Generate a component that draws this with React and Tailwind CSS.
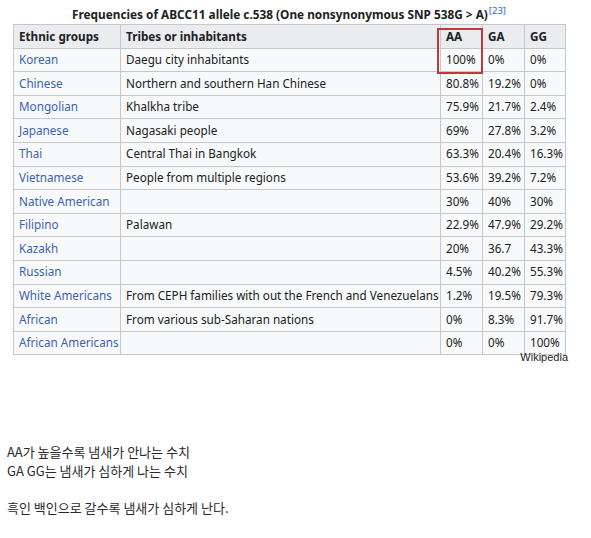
const rows = [
  ['Korean', 'Daegu city inhabitants', '100%', '0%', '0%'],
  ['Chinese', 'Northern and southern Han Chinese', '80.8%', '19.2%', '0%'],
  ['Mongolian', 'Khalkha tribe', '75.9%', '21.7%', '2.4%'],
  ['Japanese', 'Nagasaki people', '69%', '27.8%', '3.2%'],
  ['Thai', 'Central Thai in Bangkok', '63.3%', '20.4%', '16.3%'],
  ['Vietnamese', 'People from multiple regions', '53.6%', '39.2%', '7.2%'],
  ['Native American', '', '30%', '40%', '30%'],
  ['Filipino', 'Palawan', '22.9%', '47.9%', '29.2%'],
  ['Kazakh', '', '20%', '36.7', '43.3%'],
  ['Russian', '', '4.5%', '40.2%', '55.3%'],
  ['White Americans', 'From CEPH families with out the French and Venezuelans', '1.2%', '19.5%', '79.3%'],
  ['African', 'From various sub-Saharan nations', '0%', '8.3%', '91.7%'],
  ['African Americans', '', '0%', '0%', '100%'],
];

const cell = 'border border-[#c4c8cd] px-[5px] py-0 text-left align-middle whitespace-nowrap';

export default function App() {
  return (
    <div className="w-[591px] h-[538px] bg-white relative overflow-hidden font-['Noto_Sans','DejaVu_Sans',sans-serif] text-[#202122]">
      <div className="pl-[13px] pt-[5px]">
        <div className="w-[552px] text-center text-[11.8px] font-bold leading-[19px]">
          Frequencies of ABCC11 allele c.538 (One nonsynonymous SNP 538G &gt; A)
          <sup className="text-[9.5px] font-normal text-[#3366cc] ml-[1px]">[23]</sup>
        </div>
        <div className="relative w-[552px]">
          <table className="table-fixed border-collapse w-[552px] text-[11.7px] bg-[#f8f9fa]">
            <colgroup>
              <col className="w-[107px]" />
              <col className="w-[320px]" />
              <col className="w-[42px]" />
              <col className="w-[42px]" />
              <col className="w-[41px]" />
            </colgroup>
            <thead>
              <tr className="h-[23.6px] bg-[#eaecf0] font-bold">
                <th className={cell}>Ethnic groups</th>
                <th className={cell}>Tribes or inhabitants</th>
                <th className={cell}>AA</th>
                <th className={cell}>GA</th>
                <th className={cell}>GG</th>
              </tr>
            </thead>
            <tbody>
              {rows.map(r => (
                <tr key={r[0]} className="h-[23.6px]">
                  <td className={`${cell} text-[#3b63ad]`}>{r[0]}</td>
                  <td className={cell}>{r[1]}</td>
                  <td className={cell}>{r[2]}</td>
                  <td className={cell}>{r[3]}</td>
                  <td className={cell}>{r[4]}</td>
                </tr>
              ))}
            </tbody>
          </table>
          {/* highlight box around AA / 100% */}
          <div className="absolute left-[424px] top-[4px] w-[46px] h-[46px] border-2 border-[#c0393b]" />
          <div className="absolute right-[-3px] top-[326px] text-[11px] font-['Liberation_Sans',sans-serif] text-[#222] leading-[14px]">Wikipedia</div>
        </div>
      </div>
      <div className="absolute left-[7px] top-[443px] text-[13px] leading-[18.5px] text-[#2a2a2a] font-['Noto_Sans_CJK_KR',sans-serif]">
        <p>AA가 높을수록 냄새가 안나는 수치</p>
        <p>GA GG는 냄새가 심하게 나는 수치</p>
        <p>&nbsp;</p>
        <p>흑인 백인으로 갈수록 냄새가 심하게 난다.</p>
      </div>
    </div>
  );
}
